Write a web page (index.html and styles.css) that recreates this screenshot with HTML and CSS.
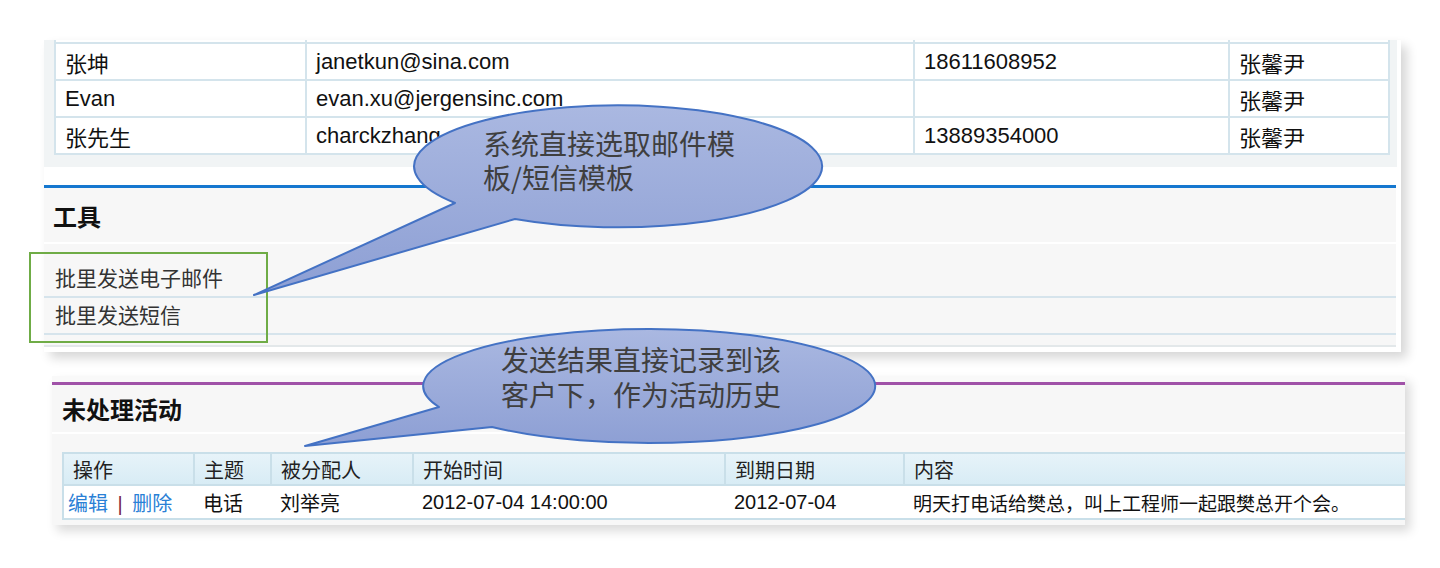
FILE: index.html
```html
<!DOCTYPE html>
<html lang="zh-CN">
<head>
<meta charset="utf-8">
<title>工具 - 批量发送</title>
<link rel="stylesheet" href="styles.css">
</head>
<body>
<div class="slide">
  <section class="panel panel-top">
    <div class="grid-frame">
      <table class="contacts">
        <colgroup>
          <col class="c1"><col class="c2"><col class="c3"><col class="c4">
        </colgroup>
        <tr class="cut"><td></td><td></td><td></td><td></td></tr>
        <tr><td>张坤</td><td>janetkun@sina.com</td><td>18611608952</td><td>张馨尹</td></tr>
        <tr><td>Evan</td><td>evan.xu@jergensinc.com</td><td></td><td>张馨尹</td></tr>
        <tr><td>张先生</td><td>charckzhang</td><td>13889354000</td><td>张馨尹</td></tr>
      </table>
    </div>
    <div class="tools">
      <div class="tools-head"><h2 class="sec-title">工具</h2></div>
      <ul class="tool-list">
        <li>批里发送电子邮件</li>
        <li>批里发送短信</li>
      </ul>
    </div>
  </section>

  <section class="panel panel-bottom">
    <div class="act-head">
      <h2 class="sec-title">未处理活动</h2>
      <span class="mini-box"></span>
    </div>
    <div class="act-body">
      <table class="acts">
        <colgroup>
          <col class="a1"><col class="a2"><col class="a3"><col class="a4"><col class="a5"><col class="a6">
        </colgroup>
        <thead>
          <tr><th>操作</th><th>主题</th><th>被分配人</th><th>开始时间</th><th>到期日期</th><th>内容</th></tr>
        </thead>
        <tbody>
          <tr>
            <td class="ops"><a class="lnk">编辑</a> <span class="bar">|</span> <a class="lnk">删除</a></td>
            <td>电话</td>
            <td>刘举亮</td>
            <td>2012-07-04 14:00:00</td>
            <td>2012-07-04</td>
            <td class="content">明天打电话给樊总，叫上工程师一起跟樊总开个会。</td>
          </tr>
        </tbody>
      </table>
    </div>
  </section>

  <div class="highlight"></div>

  <svg class="callouts" width="1440" height="568" viewBox="0 0 1440 568">
    <defs>
      <linearGradient id="cg1" x1="0" y1="0" x2="0" y2="1">
        <stop offset="0" stop-color="#aab8e1"/>
        <stop offset="1" stop-color="#8d9fd4"/>
      </linearGradient>
    </defs>
    <path class="bubble" d="M 455 203 L 254 295 L 515 219 A 204 61 0 1 0 455 203 Z"/>
    <path class="bubble" d="M 439 407 L 305 446 L 492 427 A 226 57 0 1 0 439 407 Z"/>
  </svg>
  <div class="bubble-text bt1">系统直接选取邮件模<br>板/短信模板</div>
  <div class="bubble-text bt2">发送结果直接记录到该<br>客户下，作为活动历史</div>
</div>
</body>
</html>
```

FILE: styles.css
```css
* { box-sizing: content-box; }

body {
  margin: 0;
  background: #fff;
  font-family: "Liberation Sans", "Noto Sans CJK SC", sans-serif;
  color: #111;
}

.slide {
  position: relative;
  width: 1440px;
  height: 568px;
  overflow: hidden;
  padding-top: 40px;
  box-sizing: border-box;
}

/* ---------- top panel ---------- */
.panel-top {
  margin-left: 44px;
  width: 1357px;
  background: #fff;
  padding-bottom: 5px;
  box-shadow: 6px 6px 10px rgba(0, 0, 0, 0.16);
}

.grid-frame {
  width: 1334px;
  background: #f1f4f5;
  padding: 0 9px 12px 10px;
}

.contacts {
  width: 1334px;
  table-layout: fixed;
  border-collapse: separate;
  border-spacing: 0;
  border-left: 2px solid #d4e4ec;
  font-size: 22px;
  color: #111;
}

.contacts .c1 { width: 251px; }
.contacts .c2 { width: 608px; }
.contacts .c3 { width: 315px; }
.contacts .c4 { width: 160px; }

.contacts td {
  height: 35px;
  padding: 0 0 0 9px;
  background: #fff;
  border-right: 2px solid #d4e4ec;
  border-bottom: 2px solid #d4e4ec;
  white-space: nowrap;
  overflow: hidden;
}

.contacts .cut td {
  height: 2px;
  padding: 0;
  font-size: 0;
}

.tools {
  margin-top: 18px;
  width: 1352px;
  border-top: 3px solid #1577cf;
}

.tools-head {
  height: 54px;
  background: #f7f7f7;
  display: flex;
  align-items: center;
  padding-left: 9px;
  border-bottom: 2px solid #fff;
}

.sec-title {
  margin: 0;
  font-size: 24px;
  font-weight: bold;
  color: #111;
}

.tool-list {
  list-style: none;
  margin: 0;
  padding: 17px 0 10px;
  background: #f7f7f7;
  border-bottom: 2px solid #e3e8ea;
}

.tool-list li {
  height: 35px;
  line-height: 35px;
  padding-left: 11px;
  border-bottom: 2px solid #d6e4ec;
  font-size: 21px;
  color: #333;
}

/* ---------- bottom panel ---------- */
.panel-bottom {
  margin-top: 24px;
  margin-left: 52px;
  width: 1353px;
  overflow: hidden;
  background: #f9f9f9;
  padding-top: 6px;
  box-shadow: 5px 6px 10px rgba(0, 0, 0, 0.15);
}

.act-head {
  height: 47px;
  display: flex;
  align-items: center;
  padding-left: 10px;
  background: #f7f7f7;
  border-top: 3px solid #a052a8;
  border-bottom: 2px solid #fff;
}

.mini-box {
  margin-left: auto;
  margin-right: 577px;
  width: 58px;
  height: 18px;
  border: 1px solid #c6d6e4;
  background: linear-gradient(#f4f8fb, #e1ebf2);
}

.act-body {
  background: #f7f7f7;
  padding: 18px 0 5px 10px;
}

.acts {
  width: 1363px;
  table-layout: fixed;
  border-collapse: separate;
  border-spacing: 0;
  border-left: 2px solid #c9dfe9;
  border-top: 2px solid #c9dfe9;
  font-size: 20px;
  color: #111;
}

.acts .a1 { width: 131px; }
.acts .a2 { width: 77px; }
.acts .a3 { width: 142px; }
.acts .a4 { width: 312px; }
.acts .a5 { width: 179px; }
.acts .a6 { width: 522px; }

.acts th,
.acts td {
  text-align: left;
  font-weight: normal;
  white-space: nowrap;
  overflow: hidden;
  border-bottom: 2px solid #c9dfe9;
}

.acts th {
  height: 30px;
  padding: 0 0 0 9px;
  color: #222;
  border-right: 2px solid #c9dfe9;
  background: linear-gradient(#e7f3f9, #d8ecf5);
}

.acts td {
  height: 32px;
  padding: 0 0 0 8px;
  background: #fff;
}

.acts td.ops { padding-left: 4px; }
.acts td.content { font-size: 19px; }

.lnk { color: #2a80d6; text-decoration: none; }
.bar { color: #7a1f45; margin: 0 4px; }

/* ---------- overlays ---------- */
.highlight {
  position: absolute;
  left: 29px;
  top: 252px;
  width: 235px;
  height: 87px;
  border: 2px solid #6fac46;
}

.callouts {
  position: absolute;
  left: 0;
  top: 0;
  pointer-events: none;
}

.bubble {
  fill: url(#cg1);
  stroke: #4472c4;
  stroke-width: 2;
  stroke-linejoin: round;
}

.bubble-text {
  position: absolute;
  font-family: "Noto Sans CJK SC", sans-serif;
  font-size: 28px;
  color: #3f3f3f;
  white-space: nowrap;
}

.bt1 {
  left: 483px;
  top: 126px;
  line-height: 34px;
}

.bt2 {
  left: 501px;
  top: 342px;
  line-height: 35px;
}
```
